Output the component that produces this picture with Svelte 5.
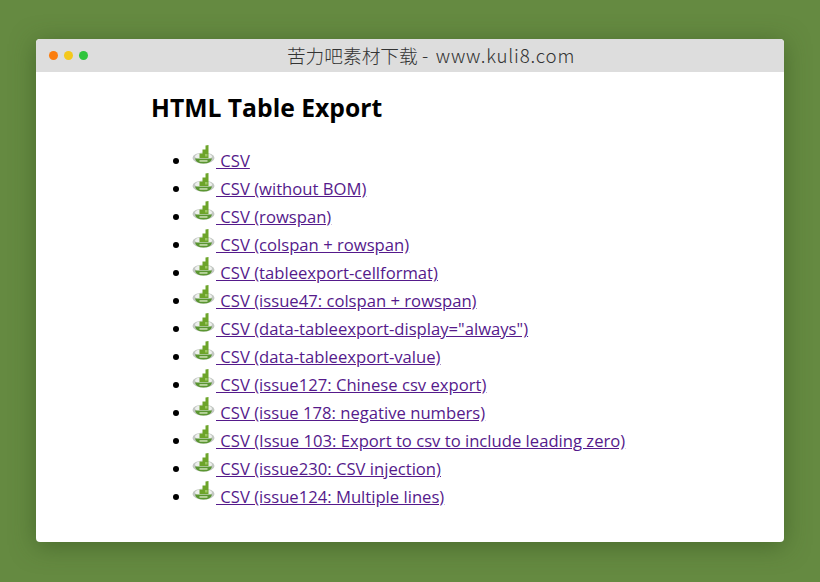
<script lang="ts">
  const links = [
    'CSV',
    'CSV (without BOM)',
    'CSV (rowspan)',
    'CSV (colspan + rowspan)',
    'CSV (tableexport-cellformat)',
    'CSV (issue47: colspan + rowspan)',
    'CSV (data-tableexport-display="always")',
    'CSV (data-tableexport-value)',
    'CSV (issue127: Chinese csv export)',
    'CSV (issue 178: negative numbers)',
    'CSV (Issue 103: Export to csv to include leading zero)',
    'CSV (issue230: CSV injection)',
    'CSV (issue124: Multiple lines)'
  ];
</script>

<div class="page">
  <div class="window">
    <header class="titlebar">
      <div class="dots">
        <span class="dot dot--orange"></span>
        <span class="dot dot--yellow"></span>
        <span class="dot dot--green"></span>
      </div>
      <div class="title">苦力吧素材下载 <span class="title__latin">- www.kuli8.com</span></div>
    </header>
    <main class="content">
      <h1>HTML Table Export</h1>
      <ul>
        {#each links as link}
          <li>
            <a href="#/export">
              <svg class="icon" width="24" height="24" viewBox="0 0 24 24" aria-hidden="true">
                <ellipse cx="11.500" cy="14" rx="11" ry="5.500" fill="#c3c8c3" />
                <ellipse cx="11.500" cy="12.500" rx="8.500" ry="3.500" fill="#eef0ee" />
                <path d="M7.500 14V9.500H10.500V5.500H13.500V1.500L16.500 1V14Z" fill="#6da42a" />
                <path d="M13 12.500V10H15.500V12.500Z" fill="#9cc663" />
                <path d="M3 14.500H20Q19 19.500 11.500 19.500Q4 19.500 3 14.500Z" fill="#5a9630" />
                <rect x="7.500" y="16.200" width="8" height="1.500" fill="#cfe2b6" />
              </svg>
              {link}
            </a>
          </li>
        {/each}
      </ul>
    </main>
  </div>
</div>

<style>
  :global(body) {
    margin: 0;
    background: #658a41;
  }

  .page {
    height: 582px;
    padding: 39px 36px 40px;
    box-sizing: border-box;
    overflow: hidden;
  }

  .window {
    height: 503px;
    background: #fff;
    border-radius: 4px;
    box-shadow: 0 4px 24px rgba(50, 80, 30, 0.55);
    overflow: hidden;
  }

  .titlebar {
    height: 33px;
    background: #dddddd;
    display: flex;
    align-items: center;
  }

  .dots {
    display: flex;
    gap: 6px;
    padding-left: 13px;
  }

  .dot {
    width: 9px;
    height: 9px;
    border-radius: 50%;
  }

  .dot--orange { background: #fb7d0e; }
  .dot--yellow { background: #f4c81c; }
  .dot--green { background: #2fc43c; }

  .title {
    flex: 1;
    text-align: center;
    padding: 0 10px 3px 0;
    font-family: "Noto Sans CJK SC", "DejaVu Sans", sans-serif;
    font-size: 18.700px;
    font-weight: 300;
    color: #333;
  }

  .title__latin {
    letter-spacing: 0.800px;
    word-spacing: 2px;
  }

  .content {
    padding: 20px 0 0 116px;
    font-family: "Open Sans", sans-serif;
    font-size: 16.650px;
    color: #000;
  }

  h1 {
    margin: 0 0 20px -1px;
    font-size: 24.700px;
    line-height: 32px;
    font-weight: 700;
  }

  ul {
    margin: 0 0 0 1px;
    padding-left: 39px;
  }

  li {
    height: 28px;
    line-height: 28px;
  }

  a {
    color: #551a8b;
    text-decoration: underline;
  }

  .icon {
    vertical-align: -1px;
  }
</style>
